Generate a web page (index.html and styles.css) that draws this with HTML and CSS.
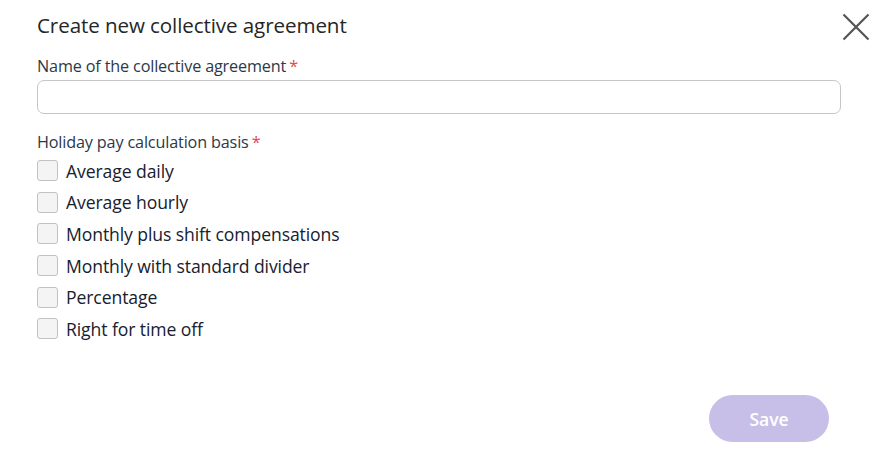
FILE: index.html
```html
<!DOCTYPE html>
<html lang="en">
<head>
<meta charset="utf-8">
<title>Create new collective agreement</title>
<link rel="stylesheet" href="styles.css">
</head>
<body>
<div class="dialog">
  <header class="head">
    <h1 class="title">Create new collective agreement</h1>
    <button class="close" aria-label="Close">
      <svg width="28" height="28" viewBox="0 0 28 28"><path d="M1.5 1.5 L26.5 26.5 M26.5 1.5 L1.5 26.5" stroke="#555" stroke-width="2.2" fill="none"/></svg>
    </button>
  </header>
  <div class="field">
    <label class="label">Name of the collective agreement<span class="req">*</span></label>
    <input class="input" type="text">
  </div>
  <div class="group">
    <div class="label">Holiday pay calculation basis<span class="req">*</span></div>
    <ul class="checks">
      <li class="check"><span class="box"></span><span>Average daily</span></li>
      <li class="check"><span class="box"></span><span>Average hourly</span></li>
      <li class="check"><span class="box"></span><span>Monthly plus shift compensations</span></li>
      <li class="check"><span class="box"></span><span>Monthly with standard divider</span></li>
      <li class="check"><span class="box"></span><span>Percentage</span></li>
      <li class="check"><span class="box"></span><span>Right for time off</span></li>
    </ul>
  </div>
  <footer class="foot">
    <button class="save">Save</button>
  </footer>
</div>
</body>
</html>
```
FILE: styles.css
```css
* { box-sizing: border-box; }
html, body { margin: 0; padding: 0; background: #fff; }
body { font-family: "Open Sans", "Noto Sans", sans-serif; color: #1e2a3a; }
.dialog { width: 878px; height: 461px; padding: 11px 37px 0 37px; display: flex; flex-direction: column; }
.head { display: flex; justify-content: space-between; align-items: flex-start; height: 45px; }
.title { margin: 0; font-size: 20.6px; font-weight: 500; color: #262626; letter-spacing: -0.1px; line-height: 28px; }
.close { border: 0; background: none; padding: 0; margin: 2px -29px 0 0; width: 28px; height: 28px; cursor: pointer; }
.field { display: flex; flex-direction: column; }
.label { font-size: 16.2px; color: #2b3848; line-height: 20px; height: 22px; letter-spacing: -0.15px; }
.req { color: #e5484d; margin-left: 3px; }
.input { margin-top: 2px; width: 804px; height: 34px; border: 1px solid #c6c6c6; border-radius: 7px; background: #fff; }
.group { margin-top: 18px; }
.checks { list-style: none; margin: 1px 0 0 0; padding: 0; }
.check { display: flex; align-items: center; height: 31.6px; font-size: 17.6px; color: #17212f; letter-spacing: -0.1px; }
.box { width: 21px; height: 21px; border: 1px solid #c2c2c2; border-radius: 3px; background: #f4f4f4; margin-right: 8px; flex: none; }
.foot { margin-top: auto; display: flex; justify-content: flex-end; padding: 0 12px 19px 0; }
.save { width: 120px; height: 47px; border: 0; border-radius: 24px; background: #c8bfe9; color: #fff; font-family: inherit; font-weight: 600; font-size: 17.5px; }
```
